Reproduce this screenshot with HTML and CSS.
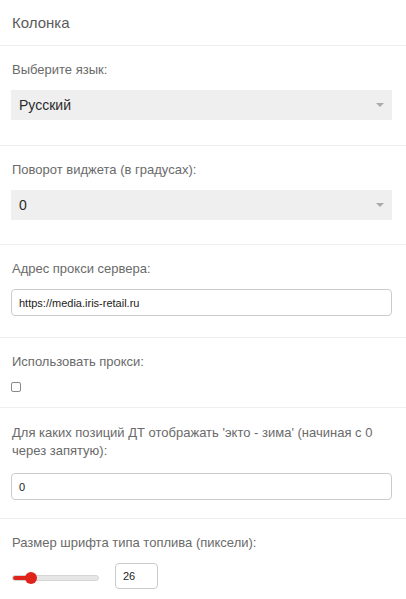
FILE: index.html
```html
<!DOCTYPE html>
<html lang="ru">
<head>
<meta charset="utf-8">
<link rel="stylesheet" href="styles.css">
</head>
<body>
<div class="panel">
  <div class="title">Колонка</div>

  <div class="section">
    <div class="label">Выберите язык:</div>
    <div class="select"><span>Русский</span><i class="caret"></i></div>
  </div>

  <div class="section sec-rot">
    <div class="label">Поворот виджета (в градусах):</div>
    <div class="select"><span>0</span><i class="caret"></i></div>
  </div>

  <div class="section sec-input">
    <div class="label">Адрес прокси сервера:</div>
    <input class="text" type="text" value="https://media.iris-retail.ru">
  </div>

  <div class="section sec-check">
    <div class="label">Использовать прокси:</div>
    <input class="check" type="checkbox">
  </div>

  <div class="section sec-input sec-multi">
    <div class="label">Для каких позиций ДТ отображать 'экто - зима' (начиная с 0 через запятую):</div>
    <input class="text" type="text" value="0">
  </div>

  <div class="section sec-range">
    <div class="label">Размер шрифта типа топлива (пиксели):</div>
    <div class="range-row">
      <div class="slider">
        <div class="track"><div class="fill"></div></div>
        <div class="thumb"></div>
      </div>
      <input class="num" type="text" value="26">
    </div>
  </div>
</div>
</body>
</html>
```

FILE: styles.css
```css
* { box-sizing: border-box; }
html, body { margin: 0; padding: 0; background: #fff; }
body {
  font-family: "Liberation Sans", Arial, sans-serif;
  color: #666;
}
.panel { width: 406px; }
.title {
  padding: 12px 12px;
  font-size: 15px;
  line-height: 21px;
  color: #5a5a5a;
  border-bottom: 1px solid #eeeeee;
}
.section {
  padding: 15px 14px 25px 11px;
  border-bottom: 1px solid #eeeeee;
}
.sec-rot { padding-bottom: 24px; }
.label {
  font-size: 13px;
  line-height: 18px;
  color: #6a6a6a;
  padding-left: 1px;
  margin-bottom: 11px;
}
.select {
  height: 30px;
  background: #efefef;
  display: flex;
  align-items: center;
  justify-content: space-between;
  padding: 0 8px;
  font-size: 14px;
  color: #2a2a2a;
}
.caret {
  width: 0; height: 0;
  border-left: 4px solid transparent;
  border-right: 4px solid transparent;
  border-top: 4px solid #aaa;
}
.sec-input { padding-bottom: 21px; }
.text {
  display: block;
  width: 100%;
  height: 27px;
  border: 1px solid #ccc;
  border-radius: 4px;
  padding: 0 7px;
  font-family: "Liberation Sans", Arial, sans-serif;
  font-size: 11px;
  color: #222;
  background: #fff;
  outline: none;
}
.sec-multi .label { line-height: 18px; margin-bottom: 13px; padding-top: 1px; }
.sec-multi { padding-bottom: 18px; }
.sec-check { padding-bottom: 15px; }
.check {
  appearance: none;
  -webkit-appearance: none;
  display: block;
  width: 10px;
  height: 10px;
  margin: 4px 0 0 0;
  border: 1px solid #8a8a8a;
  border-radius: 2px;
  background: #fff;
}
.sec-range { border-bottom: none; padding-bottom: 5px; }
.range-row {
  display: flex;
  align-items: center;
  gap: 16px;
  margin-top: 3px;
}
.slider {
  position: relative;
  width: 87px;
  height: 12px;
  margin-left: 1px;
  margin-top: 4px;
  display: flex;
  align-items: center;
}
.track {
  width: 100%;
  height: 6px;
  border-radius: 3px;
  background: #e6e6e6;
  border: 1px solid #d6d6d6;
  overflow: hidden;
}
.fill {
  width: 19px;
  height: 100%;
  background: #e0241c;
}
.thumb {
  position: absolute;
  left: 13px;
  top: 0;
  width: 12px;
  height: 12px;
  border-radius: 50%;
  background: #e0241c;
}
.num {
  width: 43px;
  height: 26px;
  border: 1px solid #ccc;
  border-radius: 4px;
  padding: 0 7px;
  font-family: "Liberation Sans", Arial, sans-serif;
  font-size: 11px;
  color: #222;
  outline: none;
}
```
